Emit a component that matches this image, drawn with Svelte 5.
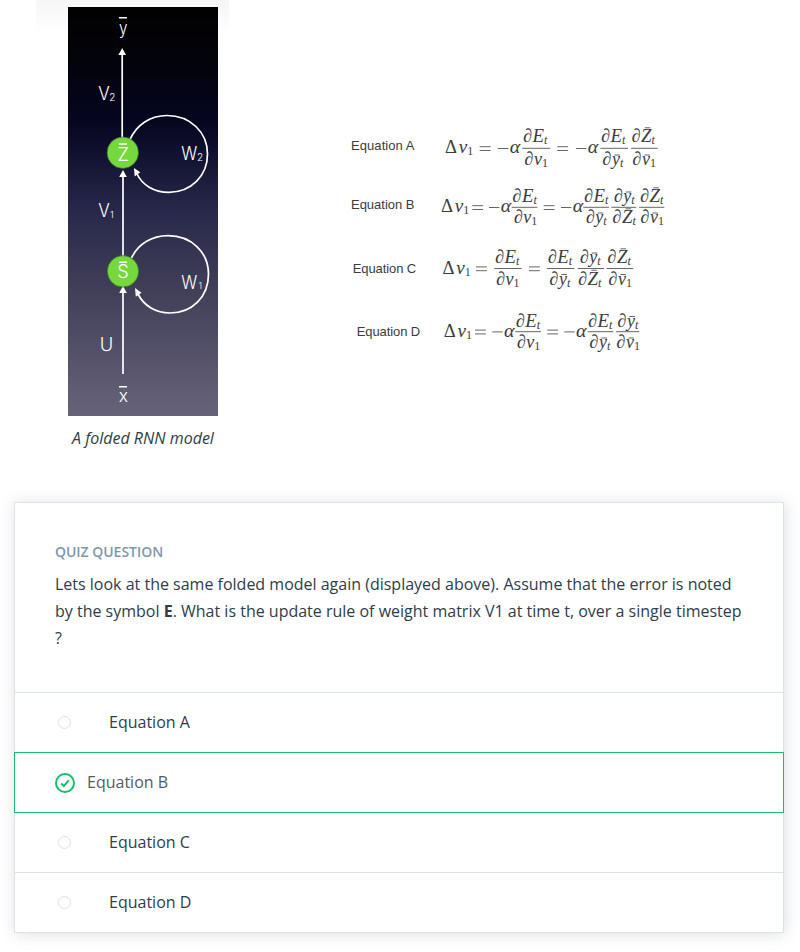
<script>
  const equations = [
    { label: 'Equation A', lx: 351, ly: 150, y: 153.3, axis: 148.3, num: 142, den: 165, delta: 445,
      equals: [479.7, 557.3], minus: [498, 576],
      fracs: [[522.3, 550.3, 'E', 523, 'v', 524.3], [600.3, 628, 'E', 601, 'ybar', 602.3], [631, 657.7, 'Z', 631.5, 'vbar', 632.3]] },
    { label: 'Equation B', lx: 351, ly: 209, y: 212.3, axis: 207.3, num: 202, den: 223, delta: 441,
      equals: [472.3, 543.7], minus: [489, 561],
      fracs: [[511.7, 537.3, 'E', 512.3, 'v', 513.7], [583.3, 609, 'E', 584, 'ybar', 585.7], [611.3, 636.3, 'ybar', 613.7, 'Z', 612.3], [639, 664.3, 'Z', 640, 'vbar', 640.3]] },
    { label: 'Equation C', lx: 352.7, ly: 273, y: 273.7, axis: 268.5, num: 263, den: 284.5, delta: 442.5,
      equals: [476, 529], minus: [],
      fracs: [[494.3, 521.7, 'E', 495, 'v', 496], [547, 574.3, 'E', 547.7, 'ybar', 549.3], [577.7, 604, 'ybar', 579.7, 'Z', 578], [606.7, 633.3, 'Z', 607.3, 'vbar', 608.3]] },
    { label: 'Equation D', lx: 356.7, ly: 336, y: 336.7, axis: 331.7, num: 326.5, den: 348, delta: 443.7,
      equals: [475, 547.3], minus: [492.3, 564.3],
      fracs: [[515.3, 541, 'E', 515.7, 'v', 516.7], [587.7, 613.3, 'E', 588, 'ybar', 589.3], [616, 639.3, 'ybar', 617.3, 'vbar', 616.3]] }
  ];
  const terms = {
    E: { letter: 'E', sub: 't', w: 11.5, bar: null },
    Z: { letter: 'Z', sub: 't', w: 10.5, bar: 14.2 },
    ybar: { letter: 'y', sub: 't', w: 8, bar: 10 },
    v: { letter: 'v', sub: '1', w: 8, bar: null },
    vbar: { letter: 'v', sub: '1', w: 8, bar: 10 }
  };
  const options = ['Equation A', 'Equation B', 'Equation C', 'Equation D'];
  let selected = $state('Equation B');
</script>

{#snippet term(kind, x, y)}
  {@const t = terms[kind]}
  <text {x} {y} class="math" textLength="9" lengthAdjust="spacingAndGlyphs">∂</text>
  <text x={x + 9.6} {y} class="math it" textLength={t.w} lengthAdjust="spacingAndGlyphs">{t.letter}</text>
  <text x={x + 9.6 + t.w} y={y + 2} class="sub" class:it={t.sub === 't'}>{t.sub}</text>
  {#if t.bar}
    <path d="M{x + 9.6 + t.w / 2 - 1.5} {y - t.bar}h5.5" class="rule" />
  {/if}
{/snippet}

<main>
  <section class="top">
    <figure>
      <div class="strip">
        <svg width="150" height="409" viewBox="68 7 150 409">
          <defs>
            <linearGradient id="night" x1="0" y1="0" x2="0" y2="1">
              <stop offset="0" stop-color="#010102" />
              <stop offset=".12" stop-color="#030309" />
              <stop offset=".27" stop-color="#05051f" />
              <stop offset=".36" stop-color="#111130" />
              <stop offset=".5" stop-color="#28284a" />
              <stop offset=".7" stop-color="#424059" />
              <stop offset="1" stop-color="#666379" />
            </linearGradient>
          </defs>
          <rect x="68" y="7" width="150" height="409" fill="url(#night)" />
          <g fill="none" stroke="#fff" stroke-width="1.7">
            <path d="M122.2 54V138M123 175V256M123 292V374" />
            <path d="M130 139.5C137 124 151 115.5 167 115.5C190 115.5 207.500 132 207.500 154C207.500 176 191 192.300 169 192.300C154 192.300 142 185 136.500 173" />
            <path d="M131.500 258C138 244 152 235.700 168 235.700C191 235.700 208.500 252 208.500 274C208.500 297 192 313 170 313C156 313 144 306 138 294" />
          </g>
          <g fill="#fff">
            <path d="M122.200 48l3.800 7h-7.600zM123 170l3.800 7h-7.600zM123 286l3.800 7h-7.600zM134 168l6.300 4.300-5.600 4.200zM135 288l6.500 4.800-5.700 4z" />
          </g>
          <g fill="#75d93d" stroke="#30602b" stroke-width=".6">
            <circle cx="122.800" cy="152.700" r="15.700" />
            <circle cx="123" cy="271.300" r="15.700" />
          </g>
          <g class="node">
            <text x="119" y="33.500" font-size="17" textLength="8.500" lengthAdjust="spacingAndGlyphs">y</text>
            <text x="117.500" y="161" font-size="18.500" textLength="11.500" lengthAdjust="spacingAndGlyphs">Z</text>
            <text x="117.300" y="278" font-size="18.500" textLength="11.500" lengthAdjust="spacingAndGlyphs">S</text>
            <text x="118.700" y="402" font-size="17" textLength="9.300" lengthAdjust="spacingAndGlyphs">x</text>
            <text x="98.300" y="100" font-size="18" textLength="11.500" lengthAdjust="spacingAndGlyphs">V</text>
            <text x="109.300" y="101" font-size="10">2</text>
            <text x="98.300" y="217" font-size="18" textLength="11.500" lengthAdjust="spacingAndGlyphs">V</text>
            <text x="110" y="217.500" font-size="9.500">1</text>
            <text x="181.300" y="160" font-size="18" textLength="16" lengthAdjust="spacingAndGlyphs">W</text>
            <text x="197" y="160.500" font-size="10">2</text>
            <text x="181.300" y="289" font-size="18" textLength="16" lengthAdjust="spacingAndGlyphs">W</text>
            <text x="198.500" y="289" font-size="9">1</text>
            <text x="99.700" y="351" font-size="18.500" textLength="13.500" lengthAdjust="spacingAndGlyphs">U</text>
          </g>
          <path d="M119 17.700h8M119 144h8M119 262.200h8M119 386.700h8" stroke="#fff" stroke-width="1.400" />
        </svg>
      </div>
      <figcaption>A folded RNN model</figcaption>
    </figure>
    <svg class="equations" width="340" height="250" viewBox="340 110 340 250">
      {#each equations as e}
        <text x={e.lx} y={e.ly} class="label" textLength="63.500">{e.label}</text>
        <text x={e.delta} y={e.y} class="math" textLength="12" lengthAdjust="spacingAndGlyphs">Δ</text>
        <text x={e.delta + 13.800} y={e.y} class="math it" textLength="8.500" lengthAdjust="spacingAndGlyphs">v</text>
        <text x={e.delta + 22.300} y={e.y + 2} class="sub">1</text>
        {#each e.equals as x}
          <path d="M{x} {e.axis - 1.600}h10.800m-10.800 3.800h10.800" class="rule" />
        {/each}
        {#each e.minus as x}
          <path d="M{x} {e.axis + 0.200}h10.400" class="rule" />
          <text x={x + 11.800} y={e.y} class="math it" textLength="10.500" lengthAdjust="spacingAndGlyphs">α</text>
        {/each}
        {#each e.fracs as [x1, x2, num, nx, den, dx]}
          <path d="M{x1} {e.axis}H{x2}" class="rule" />
          {@render term(num, nx, e.num)}
          {@render term(den, dx, e.den)}
        {/each}
      {/each}
    </svg>
  </section>

  <section class="card">
    <header>
      <h3>QUIZ QUESTION</h3>
      <p>Lets look at the same folded model again (displayed above). Assume that the error is noted<br />by the symbol <b>E</b>. What is the update rule of weight matrix V1 at time t, over a single timestep<br />?</p>
    </header>
    {#each options as option}
      <button class:selected={option === selected} onclick={() => (selected = option)}>
        {#if option === selected}
          <svg width="20" height="20" viewBox="0 0 20 20" fill="none" stroke="#15bf6a">
            <circle cx="10" cy="10" r="9" stroke-width="2" />
            <path d="M6.200 10.600l2.600 2.400 5-5.600" stroke-width="2" />
          </svg>
        {:else}
          <i></i>
        {/if}
        <span>{option}</span>
      </button>
    {/each}
  </section>
</main>

<style>
  :global(body) { margin: 0; background: #fff; overflow: hidden; }
  main { width: 800px; height: 952px; box-sizing: border-box; font-family: 'Open Sans', sans-serif; color: #2e3d49; }
  .top { display: flex; height: 502px; }
  svg { display: block; }
  figure { margin: 0 0 0 36px; width: 193px; }
  .strip { padding: 7px 0 0 32px; background: linear-gradient(#f6f6f6, #fbfbfb 20px, #fff 32px); }
  figcaption { width: 150px; margin: 9px 0 0 32px; text-align: center; white-space: nowrap; font-size: 16px; font-style: italic; line-height: 27px; }
  .equations { margin: 110px 0 0 111px; }
  .label { font: 13px 'Liberation Sans', sans-serif; fill: #3c3c3c; }
  .math { font: 19px 'Liberation Serif', serif; fill: #3c3c3c; }
  .sub { font: 12px 'Liberation Serif', serif; fill: #3c3c3c; }
  .it { font-style: italic; }
  .rule { stroke: #555; stroke-width: .9; fill: none; }
  .node { font-family: Inter, 'Liberation Sans', sans-serif; font-weight: 300; fill: #fff; }
  .card { width: 770px; height: 431px; margin-left: 14px; box-sizing: border-box; border: 1px solid #dbe2e8; box-shadow: 1px 1px 14px rgba(46, 61, 73, .17); background: #fff; }
  header { height: 189px; box-sizing: border-box; padding: 38px 40px 0; }
  h3 { margin: 0; font-size: 14px; font-weight: 600; line-height: 22px; letter-spacing: -.03px; color: #7d97ad; }
  p { margin: 8px 0 0; font-size: 16px; line-height: 27px; white-space: nowrap; }
  b { font-weight: 700; }
  button { display: flex; align-items: center; width: 768px; height: 60px; box-sizing: border-box; margin: 0; padding: 0 0 0 43px; border: 0; border-top: 1px solid #dbe2e8; border-radius: 0; background: #fff; font: 16px 'Open Sans', sans-serif; color: #2e3d49; text-align: left; }
  button i { width: 13px; height: 13px; box-sizing: border-box; border: 1px solid #dbe2e8; border-radius: 50%; margin-right: 38px; }
  button span { padding-bottom: 2px; }
  button.selected { position: relative; width: 770px; height: 61px; margin: 0 -1px -1px; padding-left: 40px; border: 1px solid #15bf6a; color: #525c65; }
  button.selected svg { margin-right: 12px; }
</style>
